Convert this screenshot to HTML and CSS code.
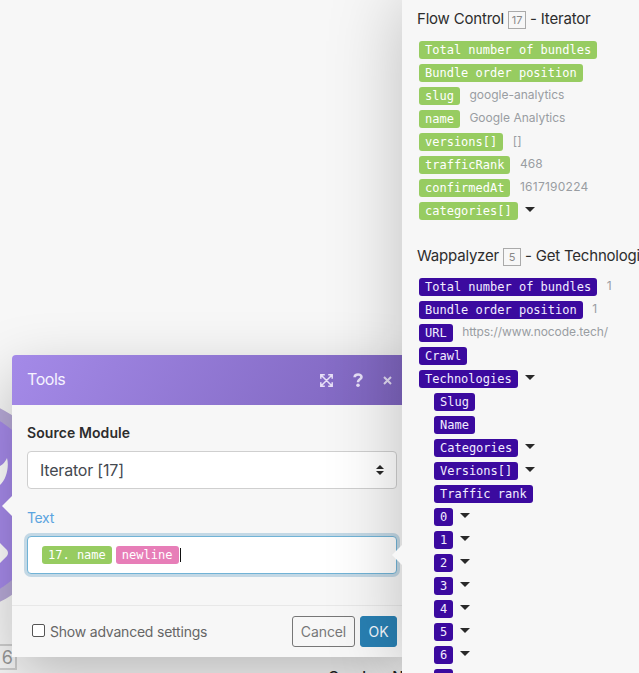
FILE: index.html
```html
<!DOCTYPE html>
<html lang="en">
<head>
<meta charset="utf-8">
<title>Tools</title>
<link rel="stylesheet" href="styles.css">
</head>
<body>
<main class="canvas">
  <div class="node">
    <svg width="12" height="200" viewBox="0 0 12 200" aria-hidden="true">
      <circle cx="-50" cy="100" r="109" fill="#b8aad8"/>
      <circle cx="-51" cy="100" r="98" fill="#a68aea"/>
      <path d="M0 61Q5 58 7 53C9.5 62 6 75 0 80ZM0 138L7 145Q9 148 7 151L0 158Z" fill="#fff"/>
    </svg>
  </div>
  <span class="node-badge">6</span>
  <span class="node-label">Create a New</span>

  <form class="dialog">
    <header class="dialog-header">
      <h1>Tools</h1>
      <svg class="expand" width="13" height="13" viewBox="0 0 13 13"><path d="M4.8 .8H.8V4.8M8.2 .8H12.2V4.8M12.2 8.2V12.2H8.2M4.8 12.2H.8V8.2M1 1L12 12M12 1L1 12"/></svg>
      <svg class="help" width="11" height="14" viewBox="0 0 11 14"><path d="M1.6 4.3C1.7 2.3 3.2 1.5 5 1.5C7 1.5 8.5 2.5 8.5 4.1C8.5 6.2 5.1 6.3 5.1 8.7V9.2"/><circle cx="5" cy="12.2" r="1.8"/></svg>
      <svg class="close" width="9" height="9" viewBox="0 0 9 9"><path d="M1 1L8 8M8 1L1 8"/></svg>
    </header>
    <div class="dialog-body">
      <label class="label-strong">Source Module</label>
      <div class="select"><span>Iterator [17]</span><svg width="8" height="10" viewBox="0 0 8 10"><path d="M0 4L4 0 8 4ZM0 6H8L4 10Z" fill="#292929"/></svg></div>
      <label class="label-text">Text</label>
      <div class="field"><span class="tag green">17. name</span><span class="tag pink">newline</span><i class="caret"></i></div>
    </div>
    <footer class="dialog-footer">
      <span class="checkbox"></span>
      <span class="advanced">Show advanced settings</span>
      <button class="button cancel" type="button">Cancel</button>
      <button class="button ok" type="button">OK</button>
    </footer>
  </form>

  <aside class="panel">
    <section class="group">
      <h2>Flow Control <span class="number">17</span> - Iterator</h2>
      <div class="row"><span class="tag green">Total number of bundles</span></div>
      <div class="row"><span class="tag green">Bundle order position</span></div>
      <div class="row"><span class="tag green">slug</span><span class="value">google-analytics</span></div>
      <div class="row"><span class="tag green">name</span><span class="value">Google Analytics</span></div>
      <div class="row"><span class="tag green">versions[]</span><span class="value">[]</span></div>
      <div class="row"><span class="tag green">trafficRank</span><span class="value">468</span></div>
      <div class="row"><span class="tag green">confirmedAt</span><span class="value digits">1617190224</span></div>
      <div class="row"><span class="tag green">categories[]</span><i class="arrow"></i></div>
    </section>
    <section class="group">
      <h2>Wappalyzer <span class="number">5</span> - Get Technologies</h2>
      <div class="row"><span class="tag violet">Total number of bundles</span><span class="value">1</span></div>
      <div class="row"><span class="tag violet">Bundle order position</span><span class="value">1</span></div>
      <div class="row"><span class="tag violet">URL</span><span class="value url">https://www.nocode.tech/</span></div>
      <div class="row"><span class="tag violet">Crawl</span></div>
      <div class="row"><span class="tag violet">Technologies</span><i class="arrow"></i></div>
      <div class="children">
        <div class="row"><span class="tag violet">Slug</span></div>
        <div class="row"><span class="tag violet">Name</span></div>
        <div class="row"><span class="tag violet">Categories</span><i class="arrow"></i></div>
        <div class="row"><span class="tag violet">Versions[]</span><i class="arrow"></i></div>
        <div class="row"><span class="tag violet">Traffic rank</span></div>
        <div class="row"><span class="tag violet">0</span><i class="arrow"></i></div>
        <div class="row"><span class="tag violet">1</span><i class="arrow"></i></div>
        <div class="row"><span class="tag violet">2</span><i class="arrow"></i></div>
        <div class="row"><span class="tag violet">3</span><i class="arrow"></i></div>
        <div class="row"><span class="tag violet">4</span><i class="arrow"></i></div>
        <div class="row"><span class="tag violet">5</span><i class="arrow"></i></div>
        <div class="row"><span class="tag violet">6</span><i class="arrow"></i></div>
        <div class="row"><span class="tag violet">7</span></div>
      </div>
    </section>
  </aside>
</main>
</body>
</html>
```
FILE: styles.css
```css
* { box-sizing: border-box; }
body { margin: 0; font-family: Inter, "Liberation Sans", sans-serif; color: #2d2d2d; }
.canvas { position: relative; width: 639px; height: 673px; overflow: hidden; background: #f7f7f7; }

.node { position: absolute; left: 0; top: 405px; }
.node svg { display: block; }
.node-badge { position: absolute; left: -14px; top: 644px; width: 31px; height: 26px; padding-right: 2px; border: 2px solid #cfcfcf; text-align: right; font-size: 18px; line-height: 23px; color: #999; }
.node-label { position: absolute; left: 328px; top: 668px; font-size: 15px; line-height: 18px; font-weight: 500; white-space: nowrap; color: #222; }

.dialog { position: absolute; left: 12px; top: 355px; width: 400px; height: 302px; display: flex; flex-direction: column; background: #f7f7f7; border-radius: 4px 4px 0 0; box-shadow: 0 20px 60px rgba(0, 0, 0, .25); }
.dialog::before { content: ""; position: absolute; left: -10px; top: 141px; border: 10px solid transparent; border-left: 0; border-right-color: #f7f7f7; }
.dialog-header { height: 50px; display: flex; align-items: center; padding: 0 20px 0 15px; border-radius: 4px 4px 0 0; background: linear-gradient(120deg, #a48ae8, #7c63bc); color: #f6f3ff; }
.dialog-header h1 { margin: -2px auto 0 0; font-size: 16px; font-weight: 400; letter-spacing: -.45px; }
.dialog-header svg { fill: #e7e0f7; }
.expand path { fill: none; stroke: #e7e0f7; stroke-width: 1.5; }
.help { margin-left: 20px; }
.help path { fill: none; stroke: #e7e0f7; stroke-width: 2.6; }
.close { margin: 0 0 0 19px; }
.close path { stroke: #e0d9f0; stroke-width: 2; }
.dialog-body { height: 200px; padding: 18px 15px 0; display: flex; flex-direction: column; }
.label-strong { font-size: 14px; line-height: 20px; font-weight: 600; letter-spacing: .08px; }
.select { display: flex; align-items: center; justify-content: space-between; width: 370px; height: 38px; margin-top: 8px; padding: 0 12px 0 12px; border: 1px solid #cfcfcf; border-radius: 4px; background: #fff; font-size: 16px; letter-spacing: -.2px; color: #444950; }
.label-text { margin-top: 19px; font-size: 14px; line-height: 20px; letter-spacing: -.35px; color: #5ba4e0; }
.field { display: flex; align-items: center; width: 370px; height: 38px; margin-top: 8px; padding-left: 14px; border: 1px solid #71b3d6; border-radius: 4px; background: #fff; box-shadow: 0 0 0 3px #c3d8e5; }
.field .pink { margin-left: 4px; width: 63px; }
.caret { width: 1px; height: 14px; margin-left: 1px; background: #111; }
.dialog-footer { height: 52px; display: flex; align-items: center; padding: 0 15px 0 20px; border-top: 1px solid #e8e8e8; color: #666; }
.checkbox { width: 13px; height: 13px; margin-top: -2px; border: 1px solid #555; border-radius: 2px; background: #fff; }
.advanced { margin: 0 auto 0 5px; font-size: 14px; letter-spacing: -.21px; }
.button { height: 31px; padding: 0; border: 1px solid #777; border-radius: 3px; font: 14px Inter, sans-serif; letter-spacing: -.1px; background: transparent; color: #777; }
.cancel { width: 63px; }
.ok { width: 37px; margin-left: 5px; border-color: #2980b3; background: #2980b3; color: #f5faff; }

.panel { position: absolute; left: 402px; top: 0; width: 237px; height: 673px; padding: 9px 0 0 17px; background: #f7f7f7; box-shadow: 0 0 70px rgba(0, 0, 0, .23); }
.panel::before { content: ""; position: absolute; left: -10px; top: 545px; border: 10px solid transparent; border-left: 0; border-right-color: #f7f7f7; }
.group { height: 237px; }
h2 { display: flex; align-items: flex-start; margin: 0 0 9px -2px; height: 23px; font-size: 15px; line-height: 20px; font-weight: 400; letter-spacing: -.2px; white-space: pre; }
.number { flex: none; width: 18px; height: 18px; margin: 2px 0 0; border: 1px solid #aaa; text-align: center; font-size: 11px; line-height: 16px; letter-spacing: 0; color: #888; }
.row { display: flex; align-items: flex-start; height: 23px; }
.tag { flex: none; height: 18px; padding: 0 6px; border-radius: 3px; font: 12px/18px "DejaVu Sans Mono", monospace; white-space: pre; color: #fff; }
.green { background: #97cc61; }
.pink { background: #e77eb8; }
.violet { background: #3b0a9f; color: #f2edff; }
.value { margin-left: 9.5px; font-size: 12px; line-height: 15px; white-space: nowrap; color: #999da2; }
.digits { letter-spacing: .25px; }
.url { letter-spacing: -.08px; }
.arrow { margin: 5px 0 0 7px; border: 5px solid transparent; border-top-color: #292929; border-bottom: 0; }
.children { padding-left: 15px; }
```
